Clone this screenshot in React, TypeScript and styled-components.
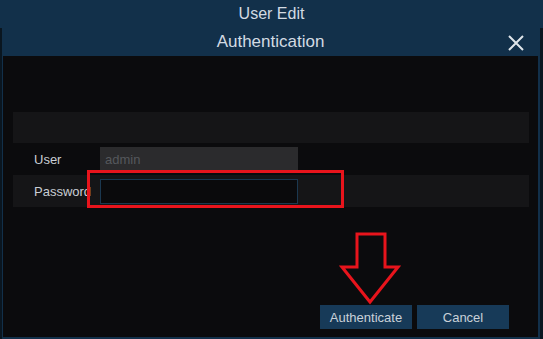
import { FunctionComponent } from 'react'
import styled, { createGlobalStyle } from 'styled-components'

const GlobalStyle = createGlobalStyle`
  html, body {
    margin: 0;
    padding: 0;
    background: #12304a;
  }
  body {
    font-family: "Liberation Sans", Arial, sans-serif;
  }
`

const Screen = styled.div`
  width: 543px;
  height: 339px;
  display: flex;
  flex-direction: column;
  background: #12304a;
  overflow: hidden;
`

const TopBar = styled.div`
  height: 28px;
  display: flex;
  align-items: center;
  justify-content: center;
  color: #d3dbe3;
  font-size: 16px;
`

const Stage = styled.div`
  flex: 1;
  display: flex;
`

const EdgeStrip = styled.div<{ $w: number }>`
  width: ${p => p.$w}px;
  background: #0a1620;
`

const Dialog = styled.div`
  flex: 1;
  display: flex;
  flex-direction: column;
  background: #12304a;
  padding: 0 2px 2px 1px;
`

const DialogHeader = styled.div`
  height: 28px;
  position: relative;
  display: flex;
  align-items: center;
  justify-content: center;
  color: #d3dbe3;
  font-size: 17px;
`

const CloseButton = styled.button`
  position: absolute;
  right: 12px;
  top: 5px;
  width: 20px;
  height: 20px;
  padding: 0;
  border: none;
  background: transparent;
  display: flex;
  align-items: center;
  justify-content: center;
`

const Body = styled.div`
  flex: 1;
  position: relative;
  display: flex;
  flex-direction: column;
  background: #0b0b0d;
  padding: 56px 9px 0 10px;
`

const SectionBar = styled.div`
  height: 31px;
  background: #151517;
`

const Row = styled.div<{ $striped?: boolean }>`
  height: 32px;
  display: flex;
  align-items: center;
  background: ${p => (p.$striped ? '#151517' : 'transparent')};
`

const Label = styled.span`
  width: 66px;
  padding-left: 21px;
  color: #c9ced4;
  font-size: 13px;
  white-space: nowrap;
  overflow: hidden;
`

const Input = styled.div<{ $disabled?: boolean }>`
  width: 198px;
  height: 25px;
  box-sizing: border-box;
  display: flex;
  align-items: center;
  padding-left: 4px;
  font-size: 13px;
  color: #55585c;
  background: ${p => (p.$disabled ? '#2b2b2d' : '#0a0a0c')};
  border: 1px solid ${p => (p.$disabled ? '#2b2b2d' : '#1b3850')};
`

const Footer = styled.div`
  margin-top: auto;
  display: flex;
  justify-content: flex-end;
  gap: 5px;
  padding: 0 20px 8px 0;
`

const Button = styled.button`
  width: 92px;
  height: 24px;
  border: none;
  background: #173a58;
  color: #c9d1d9;
  font-family: "Liberation Sans", Arial, sans-serif;
  font-size: 13px;
  padding: 0;
`

const Highlight = styled.div`
  position: absolute;
  left: 84px;
  top: 114px;
  width: 257px;
  height: 38px;
  box-sizing: border-box;
  border: 3px solid #e8141c;
`

const Arrow = styled.svg`
  position: absolute;
  left: 336px;
  top: 175px;
`

export const App: FunctionComponent = () => {
  return (
    <>
      <GlobalStyle />
      <Screen>
        <TopBar>User Edit</TopBar>
        <Stage>
          <EdgeStrip $w={2} />
          <Dialog>
            <DialogHeader>
              Authentication
              <CloseButton aria-label="Close">
                <svg width="16" height="16" viewBox="0 0 16 16">
                  <path d="M1 1 L15 15 M15 1 L1 15" stroke="#dfe5ea" strokeWidth="2" />
                </svg>
              </CloseButton>
            </DialogHeader>
            <Body>
              <SectionBar />
              <Row>
                <Label>User</Label>
                <Input $disabled>admin</Input>
              </Row>
              <Row $striped>
                <Label>Password</Label>
                <Input />
              </Row>
              <Footer>
                <Button>Authenticate</Button>
                <Button>Cancel</Button>
              </Footer>
              <Highlight />
              <Arrow width="62" height="74" viewBox="0 0 62 74">
                <path
                  d="M18 3 L46 3 L46 36 L59 36 L31 71 L3 36 L18 36 Z"
                  fill="none"
                  stroke="#e8141c"
                  strokeWidth="3"
                  strokeLinejoin="miter"
                />
              </Arrow>
            </Body>
          </Dialog>
          <EdgeStrip $w={3} />
        </Stage>
      </Screen>
    </>
  )
}

export default App
